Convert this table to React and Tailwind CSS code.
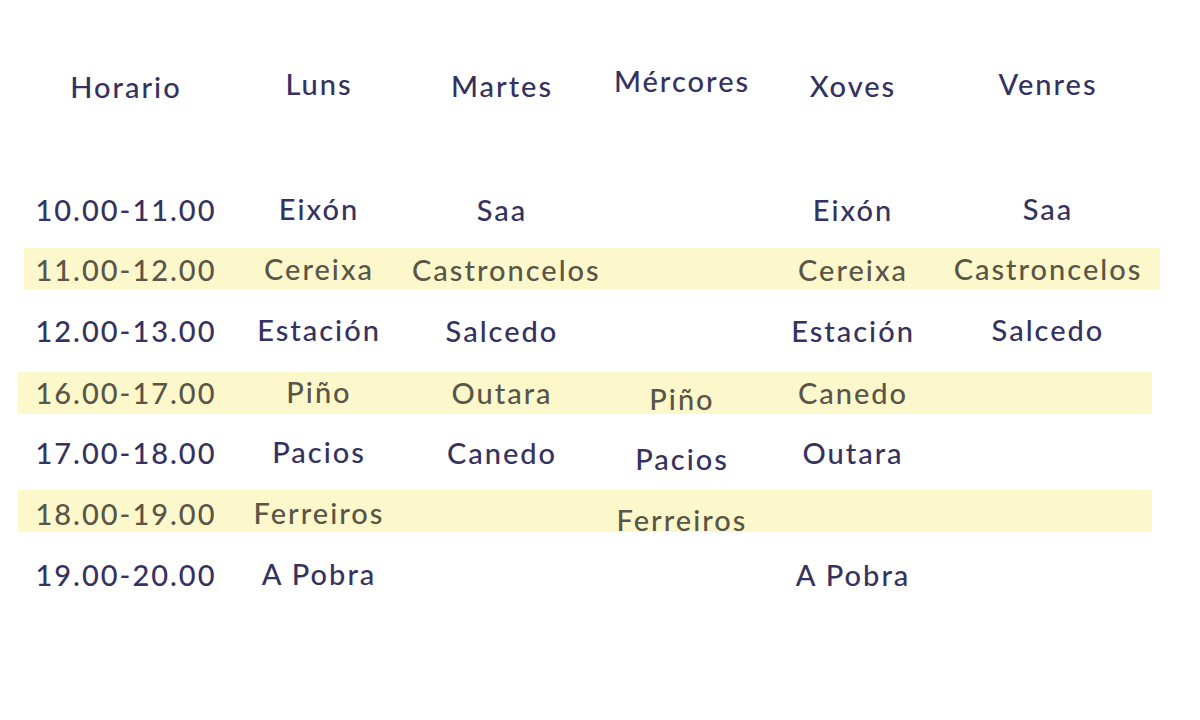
import React from "react";

const cols = "grid grid-cols-[200px_186px_180px_180px_162px_228px] items-center";

const rows = [
  { t: "10.00-11.00", c: ["Eixón", "Saa", "", "Eixón", "Saa"], y: false, m: "mt-0", s: "" },
  { t: "11.00-12.00", c: ["Cereixa", "Castroncelos", "", "Cereixa", "Castroncelos"], y: true, a: true, m: "mt-[18px]", s: "" },
  { t: "12.00-13.00", c: ["Estación", "Salcedo", "", "Estación", "Salcedo"], y: false, m: "mt-[19px]", s: "" },
  { t: "16.00-17.00", c: ["Piño", "Outara", "Piño", "Canedo", ""], y: true, m: "mt-[21px]", s: "-translate-y-[1px]" },
  { t: "17.00-18.00", c: ["Pacios", "Canedo", "Pacios", "Outara", ""], y: false, m: "mt-[17px]", s: "" },
  { t: "18.00-19.00", c: ["Ferreiros", "", "Ferreiros", "", ""], y: true, m: "mt-[17px]", s: "translate-y-[2px]" },
  { t: "19.00-20.00", c: ["A Pobra", "", "", "A Pobra", ""], y: false, m: "mt-[21px]", s: "" },
];

export default function App() {
  return (
    <div
      className="w-[1200px] h-[720px] bg-white pt-[62px]"
      style={{ fontFamily: '"Lato", "Noto Sans", sans-serif' }}
    >
      <div className={`${cols} ml-[26px] h-[48px] text-[29px] tracking-[2px] font-medium text-[#36325f] text-center`}>
        <div className="translate-y-[1px]">Horario</div>
        <div className="-translate-y-[2px]">Luns</div>
        <div>Martes</div>
        <div className="-translate-y-[5px]">Mércores</div>
        <div>Xoves</div>
        <div className="-translate-y-[2px]">Venres</div>
      </div>
      <div className="mt-[78px] flex flex-col">
        {rows.map((r, i) => (
          <div
            key={i}
            className={`${r.m} ${
              r.y
                ? r.a
                  ? "ml-[24px] w-[1136px] h-[42px] bg-[#fdf8cc] pl-[2px] text-[#5a5546]"
                  : "ml-[18px] w-[1134px] h-[42px] bg-[#fdf8cc] pl-[8px] text-[#5a5546]"
                : "ml-[26px] h-[42px] text-[#36325f]"
            }`}
          >
            <div className={`${cols} ${r.s} h-full text-[29px] tracking-[2px] font-medium text-center leading-none`}>
              <div>{r.t}</div>
              <div className="-translate-y-[1px]">{r.c[0]}</div>
              <div>{r.c[1]}</div>
              <div className="translate-y-[6px]">{r.c[2]}</div>
              <div>{r.c[3]}</div>
              <div className="-translate-y-[1px]">{r.c[4]}</div>
            </div>
          </div>
        ))}
      </div>
    </div>
  );
}
